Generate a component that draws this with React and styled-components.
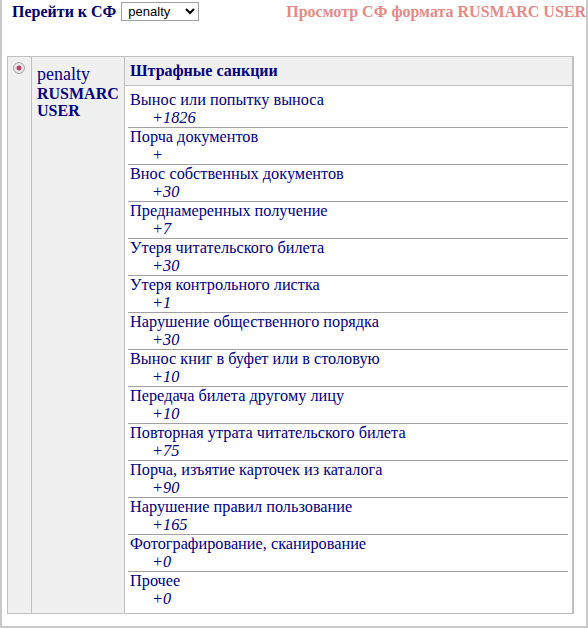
import styled, { createGlobalStyle } from 'styled-components'

const GlobalStyle = createGlobalStyle`
  html, body {
    margin: 0;
    padding: 0;
    background: #fff;
  }
  body {
    font-family: 'Liberation Serif', 'Times New Roman', serif;
    color: #000080;
  }
`

const penalties = [
  { name: 'Вынос или попытку выноса', value: '+1826' },
  { name: 'Порча документов', value: '+' },
  { name: 'Внос собственных документов', value: '+30' },
  { name: 'Преднамеренных получение', value: '+7' },
  { name: 'Утеря читательского билета', value: '+30' },
  { name: 'Утеря контрольного листка', value: '+1' },
  { name: 'Нарушение общественного порядка', value: '+30' },
  { name: 'Вынос книг в буфет или в столовую', value: '+10' },
  { name: 'Передача билета другому лицу', value: '+10' },
  { name: 'Повторная утрата читательского билета', value: '+75' },
  { name: 'Порча, изъятие карточек из каталога', value: '+90' },
  { name: 'Нарушение правил пользование', value: '+165' },
  { name: 'Фотографирование, сканирование', value: '+0' },
  { name: 'Прочее', value: '+0' },
]

const Frame = styled.div`
  box-sizing: border-box;
  width: 588px;
  height: 628px;
  border: 2px solid #c8c8c8;
  border-top: none;
  overflow: hidden;
`

const TopBar = styled.div`
  display: flex;
  align-items: flex-start;
  justify-content: space-between;
  height: 56px;
  padding-left: 10px;
  white-space: nowrap;
`

const JumpLabel = styled.label`
  display: flex;
  align-items: center;
  gap: 5px;
  margin-top: 2px;
  font-size: 16px;
  font-weight: bold;
  color: #000066;
`

const Select = styled.select`
  width: 78px;
  height: 19px;
  padding: 0 2px;
  border: 1px solid #a0a0a0;
  border-radius: 0;
  background: #fff;
  font-family: 'Liberation Sans', Arial, sans-serif;
  font-size: 13px;
  color: #000;
`

const Title = styled.div`
  margin-top: 3px;
  font-size: 16px;
  font-weight: bold;
  color: #e58a85;
`

const Grid = styled.div`
  display: grid;
  grid-template-columns: 23px 92px 447px;
  grid-template-rows: 28px auto;
  margin-left: 5px;
  width: 567px;
  border: 1px solid #c0c0c0;
  background: #c0c0c0;
  gap: 1px;
  box-sizing: border-box;
`

const SideCell = styled.div`
  grid-row: 1 / span 2;
  background: #f0f0f0;
`

const RadioCell = styled(SideCell)`
  display: flex;
  justify-content: center;
  padding-top: 5px;
`

const Radio = styled.span`
  box-sizing: border-box;
  width: 12px;
  height: 12px;
  margin-left: -1px;
  border-radius: 50%;
  border: 1px solid #a8a8a8;
  background: radial-gradient(circle, #c0406a 0 2.2px, #e8e8e8 2.8px, #dcdcdc 100%);
`

const NameCell = styled(SideCell)`
  padding: 6px 4px 0 5px;
`

const Code = styled.div`
  font-size: 18px;
  line-height: 22px;
`

const Format = styled.div`
  font-size: 16px;
  font-weight: bold;
  line-height: 17px;
`

const Heading = styled.div`
  display: flex;
  align-items: center;
  padding-left: 5px;
  background: #f0f0f0;
  font-size: 16px;
  font-weight: bold;
`

const Body = styled.div`
  padding: 5px 4px 5px 3px;
  background: #fff;
`

const Item = styled.div`
  font-size: 16.3px;
  line-height: 18px;
  border-bottom: 1px solid #a0a0a0;
  padding-left: 2px;
  white-space: nowrap;

  &:last-child {
    border-bottom: none;
  }
`

const Value = styled.div`
  padding-left: 22px;
  font-style: italic;
`

export default function App() {
  return (
    <>
      <GlobalStyle />
      <Frame>
        <TopBar>
          <JumpLabel>
            Перейти к СФ
            <Select defaultValue='penalty'>
              <option value='penalty'>penalty</option>
            </Select>
          </JumpLabel>
          <Title>Просмотр СФ формата RUSMARC USER</Title>
        </TopBar>
        <Grid>
          <RadioCell>
            <Radio />
          </RadioCell>
          <NameCell>
            <Code>penalty</Code>
            <Format>RUSMARC USER</Format>
          </NameCell>
          <Heading>Штрафные санкции</Heading>
          <Body>
            {penalties.map((p) => (
              <Item key={p.name}>
                {p.name}
                <Value>{p.value}</Value>
              </Item>
            ))}
          </Body>
        </Grid>
      </Frame>
    </>
  )
}
